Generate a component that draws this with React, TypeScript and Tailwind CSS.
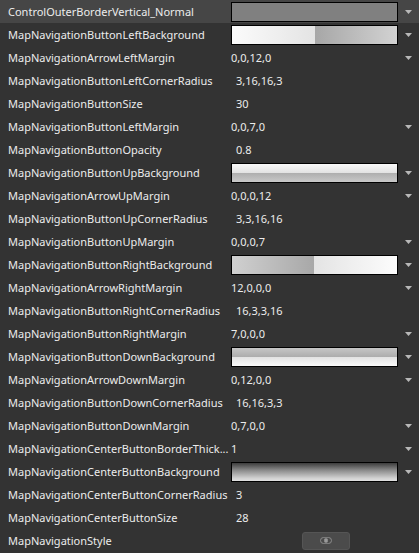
import React from 'react'

type Row = { name: string; kind: 'swatch' | 'text' | 'plain' | 'button'; value?: string; bg?: string; arrow?: boolean }

const rows: Row[] = [
  { name: 'ControlOuterBorderVertical_Normal', kind: 'swatch', bg: 'bg-[#808080]', arrow: true },
  { name: 'MapNavigationButtonLeftBackground', kind: 'swatch', bg: 'bg-[linear-gradient(to_right,#fbfbfb_0%,#e4e4e4_50%,#a7a7a7_50.5%,#d2d2d2_100%)]', arrow: true },
  { name: 'MapNavigationArrowLeftMargin', kind: 'text', value: '0,0,12,0', arrow: true },
  { name: 'MapNavigationButtonLeftCornerRadius', kind: 'plain', value: '3,16,16,3' },
  { name: 'MapNavigationButtonSize', kind: 'plain', value: '30' },
  { name: 'MapNavigationButtonLeftMargin', kind: 'text', value: '0,0,7,0', arrow: true },
  { name: 'MapNavigationButtonOpacity', kind: 'plain', value: '0.8' },
  { name: 'MapNavigationButtonUpBackground', kind: 'swatch', bg: 'bg-[linear-gradient(to_bottom,#f9f9f9_0%,#e2e2e2_50%,#afafaf_52%,#c9c9c9_100%)]', arrow: true },
  { name: 'MapNavigationArrowUpMargin', kind: 'text', value: '0,0,0,12', arrow: true },
  { name: 'MapNavigationButtonUpCornerRadius', kind: 'plain', value: '3,3,16,16' },
  { name: 'MapNavigationButtonUpMargin', kind: 'text', value: '0,0,0,7', arrow: true },
  { name: 'MapNavigationButtonRightBackground', kind: 'swatch', bg: 'bg-[linear-gradient(to_right,#d0d0d0_0%,#a8a8a8_49.5%,#e4e4e4_50%,#fcfcfc_100%)]', arrow: true },
  { name: 'MapNavigationArrowRightMargin', kind: 'text', value: '12,0,0,0', arrow: true },
  { name: 'MapNavigationButtonRightCornerRadius', kind: 'plain', value: '16,3,3,16' },
  { name: 'MapNavigationButtonRightMargin', kind: 'text', value: '7,0,0,0', arrow: true },
  { name: 'MapNavigationButtonDownBackground', kind: 'swatch', bg: 'bg-[linear-gradient(to_bottom,#c6c6c6_0%,#adadad_48%,#e2e2e2_50%,#f9f9f9_100%)]', arrow: true },
  { name: 'MapNavigationArrowDownMargin', kind: 'text', value: '0,12,0,0', arrow: true },
  { name: 'MapNavigationButtonDownCornerRadius', kind: 'plain', value: '16,16,3,3' },
  { name: 'MapNavigationButtonDownMargin', kind: 'text', value: '0,7,0,0', arrow: true },
  { name: 'MapNavigationCenterButtonBorderThick...', kind: 'text', value: '1', arrow: true },
  { name: 'MapNavigationCenterButtonBackground', kind: 'swatch', bg: 'bg-[linear-gradient(to_bottom,#3c3c3c_0%,#8a8a8a_40%,#d2d2d2_85%,#e0e0e0_100%)]', arrow: true },
  { name: 'MapNavigationCenterButtonCornerRadius', kind: 'plain', value: '3' },
  { name: 'MapNavigationCenterButtonSize', kind: 'plain', value: '28' },
  { name: 'MapNavigationStyle', kind: 'button' },
]

function Arrow() {
  return (
    <svg width="7" height="4" viewBox="0 0 7 4" className="block">
      <path d="M0 0H7L3.5 4Z" fill="#b8b8b8" />
    </svg>
  )
}

export default function App() {
  return (
    <div className="w-[419px] h-[553px] bg-[#333333] text-[#ececec] text-[11px] overflow-hidden" style={{ fontFamily: '"Noto Sans", "Open Sans", sans-serif' }}>
      {rows.map((r, i) => (
        <div key={r.name} className={`flex items-center h-[23px] ${i === 0 ? 'bg-[#464646]' : ''}`}>
          <div className="w-[231px] pl-2 whitespace-nowrap shrink-0 leading-[23px]">{r.name}</div>
          <div className="w-[167px] shrink-0 flex items-center">
            {r.kind === 'swatch' && <div className={`w-[167px] h-[20px] border border-black ${r.bg}`} />}
            {r.kind === 'text' && <span className="leading-[23px]">{r.value}</span>}
            {r.kind === 'plain' && <span className="pl-[5px] leading-[23px]">{r.value}</span>}
            {r.kind === 'button' && (
              <div className="ml-[71px] w-[48px] h-[18px] rounded-[3px] bg-[#4b4b4b] border border-[#555] flex items-center justify-center">
                <svg width="12" height="7" viewBox="0 0 12 7">
                  <rect x="0.5" y="0.5" width="7" height="6" rx="3" fill="none" stroke="#8a8a8a" />
                  <rect x="4.5" y="0.5" width="7" height="6" rx="3" fill="none" stroke="#8a8a8a" />
                  <rect x="4.5" y="2" width="3" height="3" fill="#9a9a9a" />
                </svg>
              </div>
            )}
          </div>
          <div className="flex-1 flex justify-center">{r.arrow && <Arrow />}</div>
        </div>
      ))}
    </div>
  )
}
